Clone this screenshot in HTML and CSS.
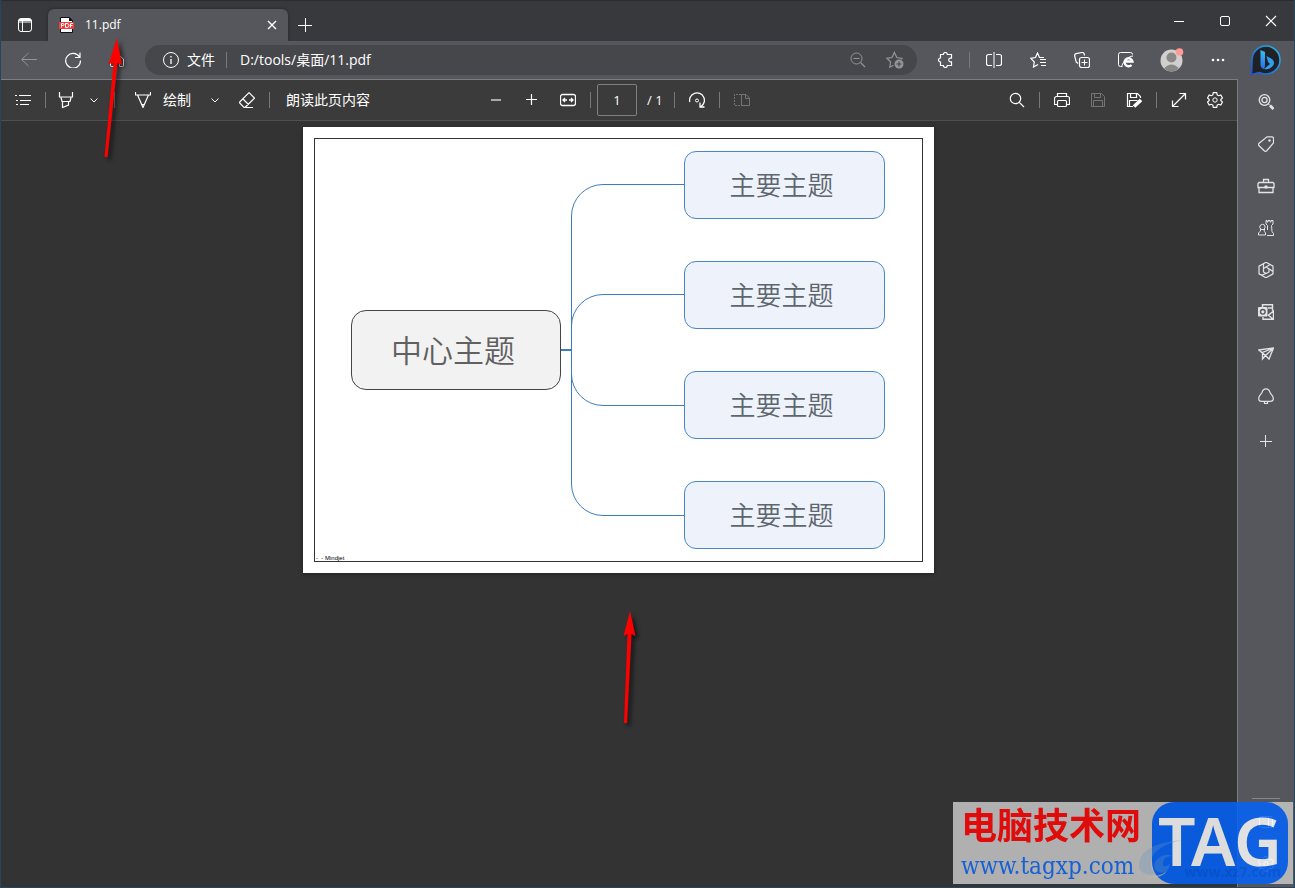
FILE: index.html
```
<!DOCTYPE html>
<html lang="zh-CN">
  <head>
    <meta charset="UTF-8" />
    <meta name="viewport" content="width=device-width, initial-scale=1.0" />
    <title>11.pdf</title>
    <link rel="stylesheet" href="styles.css" />
  </head>
  <body>
    <div class="window">
      <header class="titlebar">
        <button class="tab-actions" aria-label="标签操作">
          <svg class="icon" viewBox="0 0 16 16">
            <rect x="1.5" y="1.5" width="13" height="13" rx="2.5" />
            <path d="M1.5 3.5h13M2 2.5h12M5.5 4v10.5M1.5 5h13" />
          </svg>
        </button>
        <div class="tab">
          <svg class="pdf-icon" viewBox="0 0 16 16">
            <path d="M1.5.5h9l3 3v12h-12z" fill="#fff" stroke="#111" />
            <path d="M10 0v4h4z" fill="#111" />
            <rect y="5" width="15" height="7" rx="1" fill="#f23b3b" />
            <path
              d="M2.5 10.5v-4H4a1 1 0 0 1 0 2H3M6.500 6v4.500H8a1.500 1.500 0 0 0 0-4H6.500M11.500 10.500v-4H14M11.500 8.500h2"
              fill="none"
              stroke="#fff"
            />
          </svg>
          <span class="tab-title">11.pdf</span>
          <button class="tab-close" aria-label="关闭标签页">
            <svg class="icon" viewBox="0 0 16 16"><path d="M4 4l8 8M12 4l-8 8" stroke-width="1.4" /></svg>
          </button>
        </div>
        <button class="new-tab" aria-label="新建标签页">
          <svg class="icon" viewBox="0 0 16 16"><path d="M8.5 1v14M1 8.5h14" /></svg>
        </button>
        <div class="window-controls">
          <button aria-label="最小化">
            <svg class="icon" viewBox="0 0 16 16"><path d="M3 8.5h10" /></svg>
          </button>
          <button aria-label="最大化">
            <svg class="icon" viewBox="0 0 16 16"><rect x="3.5" y="3.5" width="9" height="9" rx="1.5" /></svg>
          </button>
          <button aria-label="关闭">
            <svg class="icon" viewBox="0 0 16 16"><path d="M3 3l10 10M13 3L3 13" stroke-width="1.2" /></svg>
          </button>
        </div>
      </header>

      <nav class="navbar">
        <button class="dim" aria-label="后退">
          <svg class="icon" viewBox="0 0 16 16"><path d="M7.500 1L.7 7.500l6.800 6.500M1 7.500h15" /></svg>
        </button>
        <button aria-label="刷新">
          <svg class="icon" viewBox="0 0 16 16"><path d="M14.5 5A7.400 7.400 0 1 0 15.5 8.5M15 .5v5h-5" stroke-width="1.2" /></svg>
        </button>
        <button aria-label="主页">
          <svg class="icon" viewBox="0 0 16 16"><path d="M1.5 7L8 1.5 14.5 7v6.5a1 1 0 0 1-1 1h-3v-5h-5v5h-3a1 1 0 0 1-1-1z" /></svg>
        </button>
        <div class="address">
          <svg class="icon" viewBox="0 0 16 16">
            <circle cx="8" cy="8" r="7.5" />
            <path d="M8 7v5M8 4v1.5" stroke-width="1.3" />
          </svg>
          <label class="scheme" for="url">文件</label>
          <i class="divider"></i>
          <input id="url" class="url" type="text" value="D:/tools/桌面/11.pdf" />
          <button class="dim" aria-label="缩小">
            <svg class="icon" viewBox="0 0 16 16"><circle cx="6.500" cy="6.500" r="5.5" /><path d="M3.500 6.500h6M10.500 10.500l4.5 4.500" stroke-width="1.2" /></svg>
          </button>
          <button class="dim" aria-label="添加到收藏夹">
            <svg class="icon icon-star" viewBox="0 0 18 18">
              <path d="M7.500 14.200L3.800 16.200l.8-5.200L.8 7.300l5.200-.8L8.400 1.500l2.400 5 5.200.8-1 1" stroke-width="1.2" />
              <circle cx="13" cy="13" r="4.5" fill="currentColor" stroke="none" />
              <path d="M13 10.5v5M10.5 13h5" stroke="#46474b" stroke-width="1.2" />
            </svg>
          </button>
        </div>
        <button aria-label="扩展">
          <svg class="icon" viewBox="0 0 16 16"><path d="M3.5 2.5h2.800a2 2 0 0 1 4 0h4.200v3.700h-1a1.800 1.800 0 0 0 0 3.600h1v3.700h-4.200a2 2 0 0 1-4 0H3.500V10a2 2 0 0 1 0-4z" stroke-width="1.200" /></svg>
        </button>
        <i class="divider nav-divider"></i>
        <button aria-label="分屏">
          <svg class="icon" viewBox="0 0 16 16"><path d="M6 2.5H2.5a2 2 0 0 0-2 2v7a2 2 0 0 0 2 2H6M10 2.5h3.5a2 2 0 0 1 2 2v7a2 2 0 0 1-2 2H10" stroke-width="1.2" /><path d="M8 0v16" stroke="#aaa" stroke-width="2" /></svg>
        </button>
        <button aria-label="收藏夹">
          <svg class="icon" viewBox="0 0 16 16"><path d="M8 12.5L3.5 15l.8-5L.8 6.300l4.700-.8L7.500 1l2 4.500H14M10 7.500h6M10 10.500h6M11 13.500h5" stroke-width="1.2" /></svg>
        </button>
        <button aria-label="集锦">
          <svg class="icon" viewBox="0 0 16 16"><path d="M4 11.500L2.200 10 .7 4a2 2 0 0 1 1.400-2.300L8 .5a2 2 0 0 1 2.200 1.500l.3 1.500" stroke-width="1.2" /><rect x="5.5" y="5.5" width="10" height="10" rx="2" stroke-width="1.2" /><path d="M10.5 7.5v6M7.5 10.5h6" /></svg>
        </button>
        <button aria-label="IE 模式">
          <svg class="icon" viewBox="0 0 16 16"><path d="M4 14.5H2.5a2 2 0 0 1-2-2v-10a2 2 0 0 1 2-2h10a2 2 0 0 1 2 2" /><path d="M6 9.5h8.500a4 4 0 1 0-1 3.500" stroke-width="2.3" /><path d="M4 15c-1-3 6-11 11-11" /></svg>
        </button>
        <button class="profile" aria-label="个人资料">
          <svg viewBox="0 0 24 24">
            <circle cx="11.5" cy="12.5" r="11" fill="#d2d0ce" />
            <circle cx="11.5" cy="9.5" r="5" fill="#8a8886" />
            <path d="M4 20.5q7.500-8 15 0a11 11 0 0 1-15 0z" fill="#8a8886" />
            <circle cx="19.5" cy="4" r="3.800" fill="#ff9a94" />
          </svg>
        </button>
        <button aria-label="设置及其他">
          <svg class="icon" viewBox="0 0 16 16"><g fill="currentColor" stroke="none"><circle cx="3" cy="8" r="1.300" /><circle cx="8" cy="8" r="1.300" /><circle cx="13" cy="8" r="1.300" /></g></svg>
        </button>
        <button class="bing" aria-label="Bing">
          <svg viewBox="0 0 32 32">
            <defs>
              <linearGradient id="ring" x1="1" y1="0" x2="0" y2="1">
                <stop offset="0" stop-color="#26b9e8" />
                <stop offset="1" stop-color="#2050d8" />
              </linearGradient>
              <linearGradient id="bingB" x1="0" y1="0" x2="0" y2="1">
                <stop offset="0" stop-color="#35c2f5" />
                <stop offset="1" stop-color="#2a6de8" />
              </linearGradient>
            </defs>
            <path d="M1.500 30.500L2 16A14 14 0 1 1 16 30q-4 0-7-1.500z" fill="#202124" stroke="url(#ring)" stroke-width="1.6" />
            <path d="M10.5 6l4.500 2v14l-1 3q-3-.5-3.500-4z" fill="url(#bingB)" />
            <path d="M16.500 12l5.500 3q3 2.500 1.500 6-4 5.500-9.500 4l6-5-2-2z" fill="#2f9df2" />
          </svg>
        </button>
      </nav>

      <div class="content">
        <main class="viewer">
          <div class="toolbar">
            <div class="tools tools-left">
              <button aria-label="目录">
                <svg class="icon" viewBox="0 0 16 16"><path d="M4 3.500h12M5 8.500h11M5 12.500h9M0 3.500h2M1 8.500h2M1 12.500h2" stroke-width="1.2" /></svg>
              </button>
              <i class="divider"></i>
              <button class="highlight" aria-label="突出显示">
                <svg class="icon" viewBox="0 0 16 16"><path d="M1.500 0v5h13V0M3 5.500l1 4h8l1-4M4.500 9.500v6l6-2.500V9.500" stroke-width="1.2" /></svg>
              </button>
              <button class="chevron highlight-menu" aria-label="突出显示选项">
                <svg class="icon-small" viewBox="0 0 8 8"><path d="M.5 2.500L4 6l3.500-3.500" /></svg>
              </button>
              <i class="divider"></i>
              <button class="draw">
                <svg class="icon" viewBox="0 0 16 16"><path d="M.5 0v3h15V0M2.500 3L8 15.500 13.500 3M6.500 12.500h3M7 14h2" stroke-width="1.2" /></svg>
                绘制
              </button>
              <button class="chevron draw-menu" aria-label="绘制选项">
                <svg class="icon-small" viewBox="0 0 8 8"><path d="M.5 2.500L4 6l3.500-3.500" /></svg>
              </button>
              <button aria-label="擦除">
                <svg class="icon" viewBox="0 0 16 16"><path d="M.7 10L10 .7l5.500 5.500-9.300 9.100H5L.7 11zM4 7l5.500 5.500M6 15.500h8" stroke-width="1.2" /></svg>
              </button>
              <i class="divider"></i>
              <button class="read-aloud">朗读此页内容</button>
            </div>
            <div class="tools">
              <button aria-label="缩小页面">
                <svg class="icon" viewBox="0 0 16 16"><path d="M3 8h10" stroke-width="2" stroke="#a8a8a8" /></svg>
              </button>
              <button aria-label="放大页面">
                <svg class="icon" viewBox="0 0 16 16"><path d="M7.500 2v11M2 7.500h11" stroke-width="1.2" /></svg>
              </button>
              <button aria-label="适合宽度">
                <svg class="icon" viewBox="0 0 16 16"><rect x=".5" y="2.500" width="15" height="11" rx="2" stroke-width="1.3" /><path d="M3 8h4M9 8h4M5 6L3 8l2 2M11 6l2 2-2 2" stroke-width="1.3" /></svg>
              </button>
              <i class="divider"></i>
              <input class="page-number" type="text" value="1" aria-label="页码" />
              <span class="page-total">/ 1</span>
              <i class="divider"></i>
              <button aria-label="旋转">
                <svg class="icon" viewBox="0 0 16 16"><path d="M.8 10A7.400 7.400 0 1 1 12 14.500M11 10.500V15h4.500" stroke-width="1.3" /><circle cx="8" cy="8.500" r="1.5" /></svg>
              </button>
              <i class="divider"></i>
              <button class="disabled" aria-label="页面视图">
                <svg class="icon" viewBox="0 0 16 16"><path d="M7.500 2v12M7.500 2.500H12l3.500 3.500v7.500h-8M11.500 2.500v4h4" /><path d="M7 2.500H.5v11H7" stroke-dasharray="2 1" /></svg>
              </button>
            </div>
            <div class="tools tools-right">
              <button aria-label="查找">
                <svg class="icon" viewBox="0 0 16 16"><circle cx="6.500" cy="6.500" r="5.200" stroke-width="1.2" /><path d="M10.300 10.300L15 15" stroke-width="1.2" /></svg>
              </button>
              <i class="divider"></i>
              <button aria-label="打印">
                <svg class="icon" viewBox="0 0 16 16"><path d="M3.500 4V1.500h9V4M3.500 12.500h-3v-6a2 2 0 0 1 2-2h11a2 2 0 0 1 2 2v6h-3" stroke-width="1.2" /><rect x="3.500" y="8.500" width="9" height="6" rx="1" stroke-width="1.2" /></svg>
              </button>
              <button class="disabled" aria-label="保存">
                <svg class="icon" viewBox="0 0 16 16"><path d="M1.500 1.500h10l3 3v10h-13zM4.500 1.500v4h6v-4M3.500 14.500v-6h9v6" /></svg>
              </button>
              <button aria-label="另存为">
                <svg class="icon" viewBox="0 0 16 16"><path d="M7 14.500H1.500v-13h10l3 3V6M4.500 1.500v4h6v-4M3.500 14.500v-6h8" stroke-width="1.2" /><path d="M8 14.500l7-6.500" stroke-width="3.500" /></svg>
              </button>
              <i class="divider"></i>
              <button aria-label="全屏">
                <svg class="icon" viewBox="0 0 16 16"><path d="M1.500 14.500l13-13M8.500 1.500h6v6M1.500 8.500v6h6" stroke-width="1.2" /></svg>
              </button>
              <button aria-label="设置">
                <svg class="icon" viewBox="0 0 16 16"><path d="M6.300.7h3.400l.5 2.200 1.400.8 2.200-.7L15.500 6l-1.700 1.500v1l1.700 1.500-1.700 3-2.200-.7-1.400.8-.5 2.200H6.300l-.5-2.200-1.400-.8-2.200.7L.5 10l1.700-1.500v-1L.5 6l1.700-3 2.200.7 1.400-.8z" stroke-width="1.2" /><circle cx="8" cy="8" r="2.200" /></svg>
              </button>
            </div>
          </div>

          <div class="pages">
            <article class="page">
              <svg class="links" viewBox="0 0 631 446">
                <g fill="none" stroke="#3f7dbf">
                  <path d="M382 57.500h-82a31.500 31.500 0 0 0-31.500 31.500V223" />
                  <path d="M382 167.500h-82a31.500 31.500 0 0 0-31.500 31.500V223" />
                  <path d="M382 278.500h-82a31.500 31.500 0 0 1-31.500-31.500V223" />
                  <path d="M382 388.500h-82a31.500 31.500 0 0 1-31.500-31.500V223" />
                  <path d="M257 223h12" stroke-width="2" />
                </g>
              </svg>
              <div class="topic topic-center">中心主题</div>
              <div class="topic topic-1">主要主题</div>
              <div class="topic topic-2">主要主题</div>
              <div class="topic topic-3">主要主题</div>
              <div class="topic topic-4">主要主题</div>
              <footer class="page-footer">- &nbsp;- Mindjet</footer>
            </article>
            <svg class="arrow arrow-page" viewBox="0 0 24 120">
              <path d="M15 2l5.500 25-4-2L12 114H9l3.500-89-4 2z" fill="#f00" />
            </svg>
          </div>
        </main>

        <aside class="sidebar">
          <button aria-label="搜索">
            <svg class="icon" viewBox="0 0 16 16"><circle cx="6.500" cy="6" r="5.300" stroke-width="1.3" /><circle cx="6.500" cy="6" r="2.600" stroke-width="1.3" /><path d="M10.500 10l1.500 1.500" /><path d="M12 11.500l3.500 3.500" stroke-width="2.800" /></svg>
          </button>
          <button aria-label="购物">
            <svg class="icon" viewBox="0 0 16 16"><path d="M9 .8h5a1.500 1.500 0 0 1 1.500 1.500V7l-7 8q-1 .8-2 0L.8 9.500q-.8-1 0-2z" stroke-width="1.2" /><circle cx="11.500" cy="4.500" r="1.200" fill="currentColor" stroke="none" /></svg>
          </button>
          <button aria-label="工具">
            <svg class="icon icon-wide" viewBox="0 0 18 16"><path d="M6.500 4V1.500h5V4M2 4.500h14l1 1v4H1v-4zM2 9.500v5h14v-5" stroke-width="1.3" /><circle cx="9" cy="9" r="1.800" fill="currentColor" stroke="none" /></svg>
          </button>
          <button aria-label="游戏">
            <svg class="icon" viewBox="0 0 16 16"><path d="M3 9.500Q.5 7 2.500 5q2-1.500 4 0Q8 7 6 9.500q0 2 1.500 3.500v2h-7v-2Q2 12 3 9.500zM2 9.500h5M9 15.500h6.500v-2l-1.500-2-.5-6L15 4V.5h-2V2h-1V.5h-2V2H9V.5H8V4l1.500 1.500V10" /></svg>
          </button>
          <button aria-label="Microsoft 365">
            <svg class="icon" viewBox="0 0 16 16"><path d="M8 .3l7 3.800v7.800l-7 3.800-7-3.800V4.100zM8 5l3 2v3l-3 1.500L5.500 10V6.500zM5.500 7V2M10.500 6.500L15 9.500M8 11.500L3 13.500M8 5l3.500-2" stroke-width="1.2" /></svg>
          </button>
          <button aria-label="Outlook">
            <svg class="icon" viewBox="0 0 16 16"><path d="M4.500 3V.8h10v6M5 13v2.300h10.500V7L10 11.500M10 11l5 4M10 4h4.500" stroke-width="1.4" /><rect y="3" width="9.500" height="9.500" rx="1" fill="currentColor" stroke="none" /><circle cx="4.800" cy="7.800" r="2.300" stroke="#56575c" stroke-width="1.4" /></svg>
          </button>
          <button aria-label="拖放">
            <svg class="icon" viewBox="0 0 16 16"><path d="M.8 4L15.500 2 11 13l-3.500-3.500zM7.500 9.500l8-7.500-11 4.500V13l3-3.500" stroke-width="1.3" /></svg>
          </button>
          <button aria-label="自然">
            <svg class="icon" viewBox="0 0 16 16"><path d="M8 .8Q5 .8 4 4.500l-2.800 4Q-.5 13.300 4 13.300h8q4.500 0 2.800-4.800L12 4.500Q11 .8 8 .8zM6.500 13.500v2h3v-2" stroke-width="1.2" /></svg>
          </button>
          <button class="sidebar-add" aria-label="自定义">
            <svg class="icon" viewBox="0 0 16 16"><path d="M7.500 2v12M2 8.500h12" /></svg>
          </button>
          <hr class="sidebar-rule" />
          <button aria-label="隐藏侧边栏">
            <svg class="icon" viewBox="0 0 16 16"><rect x="1.500" y="2.500" width="13" height="11" rx="2" /><path d="M10.500 2.500v11" /></svg>
          </button>
          <button aria-label="侧边栏设置">
            <svg class="icon" viewBox="0 0 16 16"><path d="M6.300.7h3.400l.5 2.200 1.400.8 2.200-.7L15.500 6l-1.700 1.500v1l1.700 1.500-1.700 3-2.200-.7-1.400.8-.5 2.200H6.300l-.5-2.200-1.400-.8-2.200.7L.5 10l1.700-1.500v-1L.5 6l1.700-3 2.200.7 1.400-.8z" /><circle cx="8" cy="8" r="2.200" /></svg>
          </button>
        </aside>
      </div>

      <svg class="arrow arrow-tab" viewBox="0 0 32 128">
        <path d="M22 2l5 27-4.500-2L12.500 121h-3L18.500 27l-5 1z" fill="#f00" />
      </svg>

      <div class="watermark">
        <div class="watermark-text">
          <strong>电脑技术网</strong>
          <span>www.tagxp.com</span>
        </div>
        <div class="watermark-logo">TAG</div>
        <svg class="swoosh" viewBox="0 0 48 42">
          <path d="M2 30Q0 6 45 2 18 8 14 22q-2 8 4 14Q6 38 2 30z" fill="#74a5d8" opacity=".3" />
          <path d="M18 24q8-10 17-6-10 0-9 10 5 1 7-3-1 12-12 9-6-3-3-10z" fill="#5c94d8" opacity=".4" />
          <path d="M4 39q18 1 26-6-6 9-26 6z" fill="#d8dc9c" opacity=".7" />
        </svg>
        <small class="watermark-site">www.xz7.com</small>
      </div>
    </div>
  </body>
</html>
```
FILE: styles.css
```
:root {
  --chrome: #56575c;
  --titlebar: #38393c;
  --field: #46474b;
  --toolbar: #3b3b3b;
  --canvas: #333333;
  --line: #7c7d80;
  --text: #ffffff;
}

* {
  box-sizing: border-box;
}

body {
  margin: 0;
  background: #1f4d68;
  color: var(--text);
  font-family: "Open Sans", "Noto Sans CJK SC", sans-serif;
  font-size: 14px;
  line-height: 20px;
}

button {
  display: flex;
  align-items: center;
  justify-content: center;
  flex: none;
  padding: 0;
  border: 0;
  background: none;
  color: inherit;
  font: inherit;
}

input {
  min-width: 0;
  padding: 0;
  border: 0;
  background: none;
  color: inherit;
  font: inherit;
}

.icon,
.icon-small {
  display: block;
  flex: none;
  width: 16px;
  height: 16px;
  fill: none;
  stroke: currentColor;
}

.icon-small {
  width: 8px;
  height: 8px;
}

.icon-star,
.icon-wide {
  width: 18px;
}

.icon-star {
  height: 18px;
}

.divider {
  flex: none;
  width: 1px;
  height: 16px;
  background: #77787b;
}

.window {
  position: relative;
  display: flex;
  flex-direction: column;
  height: 100vh;
  border: solid #27455c;
  border-width: 0 1px 1px;
}

/* title bar */
.titlebar {
  display: flex;
  align-items: flex-end;
  height: 41px;
  background: var(--titlebar);
  border-top: 1px solid #2b2c2f;
}

.tab-actions {
  width: 40px;
  height: 32px;
  margin: 0 3px 0 4px;
}

.tab {
  display: flex;
  align-items: center;
  width: 240px;
  height: 32px;
  padding: 0 4px 0 11px;
  border-radius: 6px 6px 0 0;
  background: var(--chrome);
  box-shadow: 0 0 3px #222;
}

.pdf-icon {
  width: 16px;
  height: 16px;
}

.tab-title {
  flex: 1;
  padding-left: 10px;
  font-size: 12px;
}

.tab-close {
  width: 24px;
  height: 24px;
}

.new-tab {
  width: 34px;
  height: 32px;
}

.window-controls {
  display: flex;
  align-self: stretch;
  margin-left: auto;
}

.window-controls button {
  width: 46px;
}

/* address row */
.navbar {
  position: relative;
  display: flex;
  align-items: center;
  height: 38px;
  padding: 0 2px 0 6px;
  background: var(--chrome);
}

.navbar > button {
  width: 44px;
  height: 32px;
}

.navbar .dim {
  color: #949598;
}

.address {
  display: flex;
  flex: 1;
  align-items: center;
  height: 30px;
  margin: 0 6px;
  padding: 0 4px 0 18px;
  border-radius: 15px;
  background: var(--field);
}

.scheme {
  margin: 0 11px 0 8px;
}

.url {
  flex: 1;
  margin-left: 13px;
}

.address button {
  width: 37px;
  height: 28px;
}

.nav-divider {
  margin: 0 2px;
}

.navbar .profile {
  width: 48px;
}

.profile svg {
  width: 24px;
  height: 24px;
}

.navbar .bing {
  width: 52px;
}

.bing svg {
  width: 32px;
  height: 32px;
}

.content {
  display: flex;
  flex: 1;
  min-height: 0;
}

.viewer {
  display: flex;
  flex: 1;
  flex-direction: column;
  min-width: 0;
  border-top: 1px solid var(--line);
  background: var(--canvas);
}

/* pdf toolbar */
.toolbar {
  display: flex;
  height: 41px;
  padding: 0 4px;
  border-bottom: 1px solid #4f4f4f;
  background: var(--toolbar);
}

.tools {
  display: flex;
  align-items: center;
}

.tools-left,
.tools-right {
  flex: 1;
}

.tools-right {
  justify-content: flex-end;
}

.tools button {
  width: 36px;
  height: 32px;
}

.tools .divider {
  margin: 0 4px;
}

.tools .highlight {
  width: 32px;
}

.tools .chevron {
  width: 24px;
}

.tools .highlight-menu {
  margin-right: 4px;
}

.tools .draw {
  width: auto;
  padding: 0 12px 0 16px;
  gap: 12px;
}

.tools .draw-menu {
  margin-right: 2px;
}

.tools .read-aloud {
  width: auto;
  padding: 0 12px;
}

.tools .disabled {
  color: #747474;
}

.page-number {
  width: 40px;
  height: 32px;
  margin-left: 2px;
  border: 1px solid #808080;
  border-radius: 2px;
  font-size: 13px;
  text-align: center;
}

.page-total {
  width: 33px;
  padding-left: 10px;
  font-size: 13px;
}

/* document */
.pages {
  position: relative;
  flex: 1;
  padding: 6px 1px 0 0;
}

.page {
  position: relative;
  width: 631px;
  height: 446px;
  margin: 0 auto;
  background: #fff;
  box-shadow: 0 1px 4px #222;
}

.page::before {
  content: "";
  position: absolute;
  inset: 11px;
  border: 1px solid #333;
}

.links {
  position: absolute;
  inset: 0;
}

.topic {
  position: absolute;
  left: 381px;
  display: flex;
  align-items: center;
  justify-content: center;
  width: 201px;
  height: 68px;
  padding: 0 6px 2px 0;
  border: 1px solid #4a86c5;
  border-radius: 12px;
  background: #edf2fb;
  color: #5e666e;
  font-family: "Noto Sans CJK SC", sans-serif;
  font-size: 26px;
  font-weight: 350;
}

.topic-center {
  top: 183px;
  left: 48px;
  width: 210px;
  height: 80px;
  border-color: #444;
  border-radius: 15px;
  background: #f2f2f2;
  color: #606060;
  font-size: 31px;
}

.topic-1 {
  top: 24px;
}

.topic-2 {
  top: 134px;
}

.topic-3 {
  top: 244px;
}

.topic-4 {
  top: 354px;
}

.page-footer {
  position: absolute;
  bottom: 12px;
  left: 13px;
  color: #000;
  font: 6px/6px "Liberation Sans", sans-serif;
}

/* sidebar */
.sidebar {
  display: flex;
  flex: none;
  flex-direction: column;
  width: 57px;
  padding: 2px 0;
  border-left: 1px solid var(--line);
  background: var(--chrome);
  color: #e4e4e4;
}

.sidebar button {
  height: 42px;
}

.sidebar .sidebar-add {
  margin-top: 3px;
}

.sidebar-rule {
  width: 28px;
  height: 1px;
  margin: auto auto 2px;
  border: 0;
  background: #85868a;
}

/* red pointers */
.arrow {
  position: absolute;
  filter: drop-shadow(3px 3px 2px rgba(0, 0, 0, 0.6));
}

.arrow-tab {
  top: 36px;
  left: 94px;
  width: 32px;
  height: 128px;
}

.arrow-page {
  top: 488px;
  left: 50%;
  width: 24px;
  height: 120px;
  margin-left: -4px;
}

.watermark {
  position: absolute;
  right: 1px;
  bottom: 3px;
  display: flex;
  width: 340px;
  height: 82px;
  padding-left: 8px;
  background: #c6c6c6;
  opacity: 0.85;
}

.watermark-text {
  display: flex;
  flex: 1;
  flex-direction: column;
}

.watermark strong {
  color: #ff0505;
  font-size: 36px;
  line-height: 48px;
  white-space: nowrap;
}

.watermark span {
  color: #1168f3;
  font: 24px/32px "DejaVu Serif Condensed", "DejaVu Serif", serif;
  white-space: nowrap;
}

.watermark-logo {
  width: 136px;
  margin-right: 5px;
  border-radius: 22px;
  background: #0363fa;
  color: #fafafa;
  font-family: "Noto Sans", sans-serif;
  font-size: 66px;
  font-weight: 600;
  line-height: 76px;
  text-align: center;
}

.swoosh {
  position: absolute;
  top: 36px;
  left: 184px;
  width: 48px;
  height: 42px;
}

.watermark-site {
  position: absolute;
  right: 12px;
  bottom: 2px;
  color: #0058e6;
  font-size: 14px;
  font-weight: 700;
}
```
